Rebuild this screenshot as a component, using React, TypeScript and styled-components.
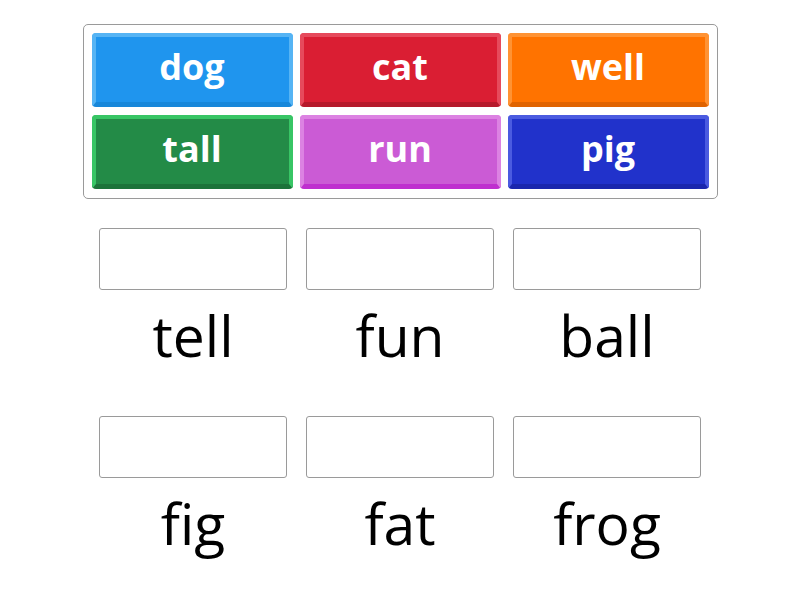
import React from "react";
import styled, { createGlobalStyle } from "styled-components";

const GlobalStyle = createGlobalStyle`
  body {
    margin: 0;
    background: #fff;
    font-family: "Open Sans", "Noto Sans", sans-serif;
  }
`;

const Page = styled.div`
  width: 800px;
  height: 600px;
  display: flex;
  flex-direction: column;
  align-items: center;
  padding-top: 24px;
  box-sizing: border-box;
`;

const Bank = styled.div`
  width: 635px;
  box-sizing: border-box;
  border: 1px solid #9a9a9a;
  border-radius: 5px;
  padding: 8px 8px 9px;
  display: grid;
  grid-template-columns: repeat(3, 1fr);
  column-gap: 7px;
  row-gap: 8px;
`;

type Tone = { face: string; light: string; dark: string };

const Tile = styled.div<{ $tone: Tone }>`
  height: 74px;
  box-sizing: border-box;
  border-radius: 4px;
  border: 4px solid ${p => p.$tone.light};
  border-bottom: 5px solid ${p => p.$tone.dark};
  background: ${p => p.$tone.face};
  display: flex;
  align-items: center;
  justify-content: center;
  color: #fff;
  font-weight: 700;
  font-size: 36px;
  line-height: 1;
  padding-bottom: 5px;
`;

const Targets = styled.div`
  margin-top: 29px;
  display: grid;
  grid-template-columns: repeat(3, 188px);
  column-gap: 19px;
  row-gap: 43px;
`;

const Slot = styled.div`
  display: flex;
  flex-direction: column;
  align-items: center;
`;

const DropBox = styled.div`
  width: 188px;
  height: 62px;
  box-sizing: border-box;
  border: 1px solid #9a9a9a;
  border-radius: 3px;
`;

const Word = styled.div`
  margin-top: 7px;
  font-size: 57px;
  line-height: 76px;
  color: #000;
`;

const tones: Record<string, Tone> = {
  blue: { face: "#1f95ee", light: "#56b4f4", dark: "#1787da" },
  red: { face: "#da1e33", light: "#e64a5c", dark: "#b6192b" },
  orange: { face: "#ff7300", light: "#ff9334", dark: "#e06300" },
  green: { face: "#238b47", light: "#38c565", dark: "#1c733a" },
  purple: { face: "#cb5bd5", light: "#dc82e2", dark: "#bf2fcf" },
  navy: { face: "#2132cb", light: "#4b5be0", dark: "#1a27ad" },
};

const tiles = [
  { word: "dog", tone: tones.blue },
  { word: "cat", tone: tones.red },
  { word: "well", tone: tones.orange },
  { word: "tall", tone: tones.green },
  { word: "run", tone: tones.purple },
  { word: "pig", tone: tones.navy },
];

const targets = ["tell", "fun", "ball", "fig", "fat", "frog"];

export default function App() {
  return (
    <>
      <GlobalStyle />
      <Page>
        <Bank>
          {tiles.map(t => (
            <Tile key={t.word} $tone={t.tone}>
              {t.word}
            </Tile>
          ))}
        </Bank>
        <Targets>
          {targets.map(w => (
            <Slot key={w}>
              <DropBox />
              <Word>{w}</Word>
            </Slot>
          ))}
        </Targets>
      </Page>
    </>
  );
}
